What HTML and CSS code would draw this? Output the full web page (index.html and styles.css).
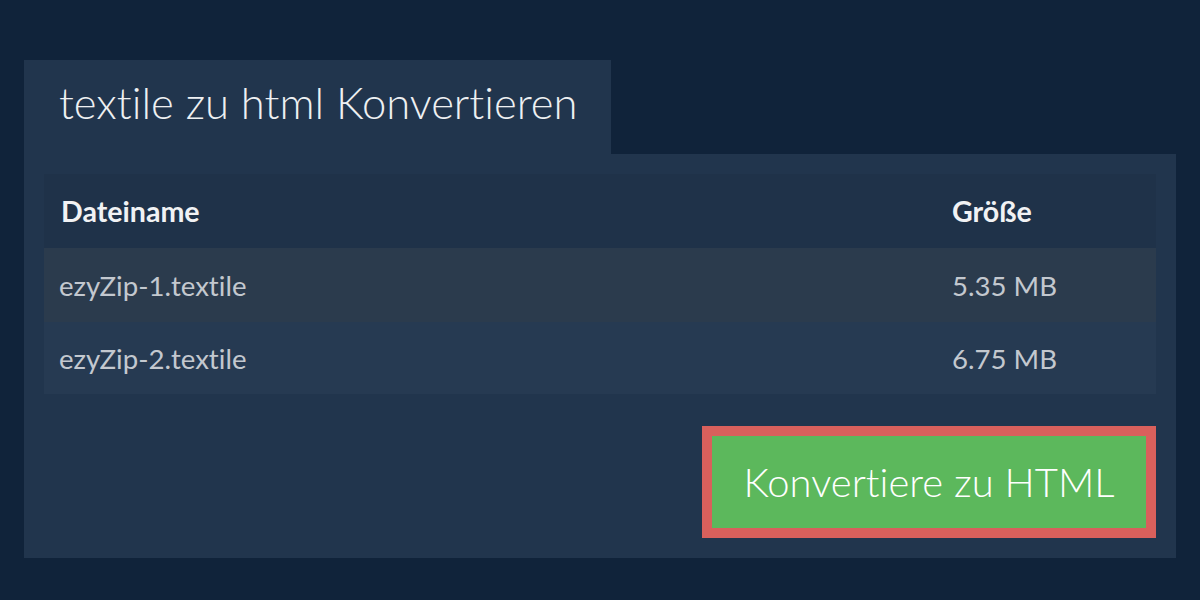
FILE: index.html
```html
<!DOCTYPE html>
<html lang="de">
<head>
<meta charset="utf-8">
<link rel="stylesheet" href="styles.css">
</head>
<body>
<div class="wrap">
  <div class="tab"><h1 class="title">textile zu html Konvertieren</h1></div>
  <div class="panel">
    <div class="table">
      <div class="row head"><div class="name">Dateiname</div><div class="size">Größe</div></div>
      <div class="row odd"><div class="name">ezyZip-1.textile</div><div class="size">5.35 MB</div></div>
      <div class="row even"><div class="name">ezyZip-2.textile</div><div class="size">6.75 MB</div></div>
    </div>
    <div class="actions"><button class="btn">Konvertiere zu HTML</button></div>
  </div>
</div>
</body>
</html>
```
FILE: styles.css
```css
html, body { margin: 0; padding: 0; }
body {
  background: #10233a;
  font-family: Lato, "Open Sans", sans-serif;
  font-variant-ligatures: none;
  width: 1200px; height: 600px; overflow: hidden;
}
.wrap { padding: 60px 24px 0 24px; }
.tab {
  width: 587px; height: 94px; box-sizing: border-box;
  background: #21354d; padding: 0 0 0 35px;
  display: flex; align-items: center;
}
.title {
  margin: 0; font-weight: 300; font-size: 43.6px; color: #eef0f2;
  line-height: 1; position: relative; top: -4px;
}
.panel {
  background: #21354d; padding: 20px 20px 20px 20px; height: 404px; box-sizing: border-box;
}
.table { display: flex; flex-direction: column; }
.row { display: flex; align-items: center; font-size: 27.6px; }
.row .name { flex: 1; padding-left: 15px; }
.row .size { width: 204px; }
.head { height: 74px; background: #1f3249; color: #f1f2f4; font-weight: 700; font-size: 28.6px; }
.head .name { padding-left: 17px; }
.odd { height: 74px; background: #2b3b4d; color: #c3c8cf; }
.even { height: 72px; background: #263a52; color: #c3c8cf; }
.actions { display: flex; justify-content: flex-end; margin-top: 32px; }
.btn {
  width: 454px; height: 112px; box-sizing: border-box;
  border: 10px solid #d9605c; background: #5cb85c; color: #fff;
  font-family: Lato, "Open Sans", sans-serif; font-weight: 300; font-size: 40px;
  font-variant-ligatures: none;
  padding: 0; cursor: pointer;
}
```
